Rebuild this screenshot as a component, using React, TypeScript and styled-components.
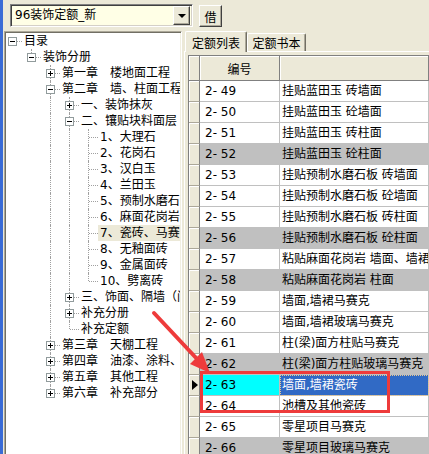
import React from 'react';
import styled, { createGlobalStyle } from 'styled-components';

const GlobalStyle = createGlobalStyle`
  html, body {
    margin: 0;
    padding: 0;
    background: #ECE9D8;
  }
  body {
    font-family: "DejaVu Sans", "Noto Sans CJK SC", sans-serif;
    font-size: 12px;
    color: #000;
  }
`;

const FACE = '#ECE9D8';
const RED = '#EE3B3B';

const Window = styled.div`
  position: relative;
  width: 429px;
  height: 454px;
  overflow: hidden;
  display: flex;
  background: ${FACE};
`;

const FrameEdge = styled.div`
  flex: none;
  width: 3px;
  background: #3A6BD6;
`;

const Main = styled.div`
  flex: 1;
  min-width: 0;
  display: flex;
  flex-direction: column;
  padding-top: 4px;
`;

const Toolbar = styled.div`
  display: flex;
  gap: 6px;
  height: 23px;
  margin-left: 7px;
`;

const Combo = styled.div`
  box-sizing: border-box;
  width: 183px;
  height: 23px;
  display: flex;
  align-items: center;
  background: #FFFFE6;
  border: 1px solid;
  border-color: #808080 #fff #fff #808080;
  box-shadow: inset 1px 1px 0 #404040, inset -1px -1px 0 #D4D0C8;
  padding: 2px;
`;

const ComboText = styled.span`
  flex: 1;
  padding-left: 2px;
  line-height: 17px;
  white-space: nowrap;
  overflow: hidden;
`;

const DropButton = styled.span`
  box-sizing: border-box;
  flex: none;
  width: 17px;
  height: 19px;
  display: flex;
  align-items: center;
  justify-content: center;
  background: ${FACE};
  border: 1px solid;
  border-color: #fff #404040 #404040 #fff;
  box-shadow: inset -1px -1px 0 #ACA899;
  &::before {
    content: '';
    border-top: 4px solid #000;
    border-left: 4px solid transparent;
    border-right: 4px solid transparent;
  }
`;

const PushButton = styled.button`
  box-sizing: border-box;
  width: 23px;
  height: 22px;
  margin-top: 1px;
  padding: 0;
  font: inherit;
  color: #000;
  background: ${FACE};
  border: 1px solid;
  border-color: #fff #404040 #404040 #fff;
  box-shadow: inset -1px -1px 0 #ACA899;
`;

const Body = styled.div`
  flex: 1;
  min-height: 0;
  display: flex;
  gap: 2px;
  margin: 4px 0 0 1px;
`;

/* ---------- tree ---------- */

const TreePanel = styled.div`
  box-sizing: border-box;
  flex: none;
  width: 178px;
  background: #fff;
  overflow: hidden;
  border-top: 1px solid #ACA899;
  border-left: 1px solid #ACA899;
  border-right: 1px solid #fff;
  box-shadow: inset 1px 1px 0 #716F64, inset -1px 0 0 #F1EFE2;
  padding: 1px 1px 0 1px;
`;

const TreeRow = styled.div`
  display: flex;
  height: 16px;
  overflow: hidden;
  white-space: nowrap;
`;

const Guide = styled.span<{ $w: number; $top?: boolean; $bottom?: boolean; $h?: boolean }>`
  position: relative;
  flex: none;
  width: ${(p) => p.$w}px;
  height: 16px;
  &::before {
    content: '';
    display: ${(p) => (p.$top || p.$bottom ? 'block' : 'none')};
    position: absolute;
    left: 6px;
    top: ${(p) => (p.$top ? 0 : 8)}px;
    bottom: ${(p) => (p.$bottom ? 0 : 8)}px;
    border-left: 1px dotted #A0A0A0;
  }
  &::after {
    content: '';
    display: ${(p) => (p.$h ? 'block' : 'none')};
    position: absolute;
    left: 7px;
    right: 0;
    top: 8px;
    border-top: 1px dotted #A0A0A0;
  }
`;

const Expander = styled.span<{ $open: boolean }>`
  position: absolute;
  z-index: 1;
  left: 2px;
  top: 4px;
  box-sizing: border-box;
  width: 9px;
  height: 9px;
  background: #fff;
  border: 1px solid #919B9C;
  &::before {
    content: '';
    position: absolute;
    left: 1px;
    top: 3px;
    width: 5px;
    height: 1px;
    background: #000;
  }
  &::after {
    content: '';
    display: ${(p) => (p.$open ? 'none' : 'block')};
    position: absolute;
    left: 3px;
    top: 1px;
    width: 1px;
    height: 5px;
    background: #000;
  }
`;

const NodeLabel = styled.span<{ $selected?: boolean }>`
  flex: 0 1 auto;
  min-width: 0;
  overflow: hidden;
  text-overflow: clip;
  padding: 0 2px;
  line-height: 16px;
  background: ${(p) => (p.$selected ? FACE : 'transparent')};
`;

type TreeNode = { label: string; open?: boolean; selected?: boolean; children?: TreeNode[] };

const leaf = (label: string, selected = false): TreeNode => ({ label, selected });
const closed = (label: string): TreeNode => ({ label, children: [], open: false });

const tree: TreeNode = {
  label: '目录',
  open: true,
  children: [
    {
      label: '装饰分册',
      open: true,
      children: [
        closed('第一章　楼地面工程'),
        {
          label: '第二章　墙、柱面工程',
          open: true,
          children: [
            closed('一、装饰抹灰'),
            {
              label: '二、镶贴块料面层',
              open: true,
              children: [
                leaf('1、大理石'),
                leaf('2、花岗石'),
                leaf('3、汉白玉'),
                leaf('4、兰田玉'),
                leaf('5、预制水磨石'),
                leaf('6、麻面花岗岩'),
                leaf('7、瓷砖、马赛克', true),
                leaf('8、无釉面砖'),
                leaf('9、金属面砖'),
                leaf('10、劈离砖'),
              ],
            },
            closed('三、饰面、隔墙（间壁）、隔断'),
            closed('补充分册'),
            leaf('补充定额'),
          ],
        },
        closed('第三章　天棚工程'),
        closed('第四章　油漆、涂料、裱糊工程'),
        closed('第五章　其他工程'),
        closed('第六章　补充部分'),
      ],
    },
  ],
};

type FlatRow = { node: TreeNode; trail: boolean[]; hasNext: boolean; root: boolean };

const flatten = (node: TreeNode, trail: boolean[], hasNext: boolean, root: boolean, out: FlatRow[]) => {
  out.push({ node, trail, hasNext, root });
  if (node.open && node.children) {
    node.children.forEach((child, i) =>
      flatten(child, [...trail, hasNext], i < node.children!.length - 1, false, out)
    );
  }
  return out;
};

const treeRows = flatten(tree, [], false, true, []);

const Tree = () => (
  <TreePanel>
    {treeRows.map(({ node, trail, hasNext, root }, i) => (
      <TreeRow key={i}>
        {trail.map((cont, j) => (
          <Guide key={j} $w={19} $top={cont} $bottom={cont} />
        ))}
        <Guide $w={16} $top={!root} $bottom={hasNext} $h>
          {node.children && <Expander $open={!!node.open} />}
        </Guide>
        <NodeLabel $selected={node.selected}>{node.label}</NodeLabel>
      </TreeRow>
    ))}
  </TreePanel>
);

/* ---------- tabs + grid ---------- */

const TabControl = styled.div`
  flex: 1;
  min-width: 0;
  display: flex;
  flex-direction: column;
`;

const TabStrip = styled.div`
  display: flex;
  align-items: flex-end;
  height: 20px;
  padding-left: 1px;
`;

const Tab = styled.div<{ $active?: boolean }>`
  position: relative;
  z-index: ${(p) => (p.$active ? 2 : 1)};
  box-sizing: border-box;
  width: ${(p) => (p.$active ? 62 : 59)}px;
  height: ${(p) => (p.$active ? 21 : 18)}px;
  margin-bottom: ${(p) => (p.$active ? -1 : 0)}px;
  display: flex;
  align-items: center;
  justify-content: center;
  background: ${FACE};
  border-top: 1px solid #fff;
  border-left: 1px solid #fff;
  border-right: 1px solid #716F64;
  border-radius: 2px 2px 0 0;
  box-shadow: inset -1px 0 0 #ACA899;
  white-space: nowrap;
`;

const TabPage = styled.div`
  flex: 1;
  min-height: 0;
  border-top: 1px solid #fff;
  border-left: 1px solid #fff;
  padding: 3px 0 0 3px;
`;

const Grid = styled.div`
  display: grid;
  grid-template-columns: 11px 80px 1fr;
  border-top: 1px solid #808080;
  border-left: 1px solid #808080;
  background: #fff;
`;

const HeadCell = styled.div`
  height: 24px;
  display: flex;
  align-items: center;
  justify-content: center;
  background: ${FACE};
  border-right: 1px solid #808080;
  border-bottom: 1px solid #808080;
  box-shadow: inset 1px 1px 0 #fff;
  white-space: nowrap;
`;

const Indicator = styled.div`
  height: 20px;
  display: flex;
  align-items: center;
  padding-left: 3px;
  background: ${FACE};
  border-right: 1px solid #808080;
  border-bottom: 1px solid #ACA899;
  box-shadow: inset 1px 1px 0 #fff;
`;

const Pointer = styled.span`
  border-left: 6px solid #000;
  border-top: 5px solid transparent;
  border-bottom: 5px solid transparent;
`;

type Tone = 'plain' | 'grey' | 'cyan' | 'focus';

const toneBg: Record<Tone, string> = {
  plain: '#fff',
  grey: '#C0C0C0',
  cyan: '#00FFFF',
  focus: '#316AC5',
};

const Cell = styled.div<{ $tone: Tone; $pad: number }>`
  height: 20px;
  line-height: 20px;
  padding-left: ${(p) => p.$pad}px;
  white-space: nowrap;
  overflow: hidden;
  background: ${(p) => toneBg[p.$tone]};
  color: ${(p) => (p.$tone === 'focus' ? '#fff' : '#000')};
  border-right: 1px solid #C0C0C0;
  border-bottom: 1px solid #C0C0C0;
  outline: ${(p) => (p.$tone === 'focus' ? '1px dotted #E8C890' : 'none')};
  outline-offset: -1px;
`;

type Quota = { code: string; name: string; grey?: boolean; current?: boolean };

const quotas: Quota[] = [
  { code: '2- 49', name: '挂贴蓝田玉 砖墙面' },
  { code: '2- 50', name: '挂贴蓝田玉 砼墙面' },
  { code: '2- 51', name: '挂贴蓝田玉 砖柱面' },
  { code: '2- 52', name: '挂贴蓝田玉 砼柱面', grey: true },
  { code: '2- 53', name: '挂贴预制水磨石板 砖墙面' },
  { code: '2- 54', name: '挂贴预制水磨石板 砼墙面' },
  { code: '2- 55', name: '挂贴预制水磨石板 砖柱面' },
  { code: '2- 56', name: '挂贴预制水磨石板 砼柱面', grey: true },
  { code: '2- 57', name: '粘贴麻面花岗岩 墙面、墙裙' },
  { code: '2- 58', name: '粘贴麻面花岗岩 柱面', grey: true },
  { code: '2- 59', name: '墙面,墙裙马赛克' },
  { code: '2- 60', name: '墙面,墙裙玻璃马赛克' },
  { code: '2- 61', name: '柱(梁)面方柱贴马赛克' },
  { code: '2- 62', name: '柱(梁)面方柱贴玻璃马赛克', grey: true },
  { code: '2- 63', name: '墙面,墙裙瓷砖', current: true },
  { code: '2- 64', name: '池槽及其他瓷砖' },
  { code: '2- 65', name: '零星项目马赛克' },
  { code: '2- 66', name: '零星项目玻璃马赛克', grey: true },
];

const QuotaGrid = () => (
  <Grid>
    <HeadCell />
    <HeadCell>编号</HeadCell>
    <HeadCell />
    {quotas.map((q) => {
      const base: Tone = q.grey ? 'grey' : 'plain';
      return (
        <React.Fragment key={q.code}>
          <Indicator>{q.current && <Pointer />}</Indicator>
          <Cell $tone={q.current ? 'cyan' : base} $pad={5}>
            {q.code}
          </Cell>
          <Cell $tone={q.current ? 'focus' : base} $pad={2}>
            {q.name}
          </Cell>
        </React.Fragment>
      );
    })}
  </Grid>
);

/* ---------- annotation ---------- */

const HighlightBox = styled.div`
  position: absolute;
  left: 200px;
  top: 371px;
  width: 190px;
  height: 42px;
  box-sizing: border-box;
  border: 3px solid ${RED};
  pointer-events: none;
`;

const ArrowLayer = styled.svg`
  position: absolute;
  left: 0;
  top: 0;
  pointer-events: none;
`;

const App = () => (
  <Window>
    <GlobalStyle />
    <FrameEdge />
    <Main>
      <Toolbar>
        <Combo>
          <ComboText>96装饰定额_新</ComboText>
          <DropButton />
        </Combo>
        <PushButton>借</PushButton>
      </Toolbar>
      <Body>
        <Tree />
        <TabControl>
          <TabStrip>
            <Tab $active>定额列表</Tab>
            <Tab>定额书本</Tab>
          </TabStrip>
          <TabPage>
            <QuotaGrid />
          </TabPage>
        </TabControl>
      </Body>
    </Main>
    <HighlightBox />
    <ArrowLayer width={429} height={454} viewBox="0 0 429 454">
      <line x1={154} y1={313} x2={198} y2={360} stroke={RED} strokeWidth={4} strokeLinecap="round" />
      <polygon points="210,373 202,352 190,364" fill={RED} />
    </ArrowLayer>
  </Window>
);

export default App;
